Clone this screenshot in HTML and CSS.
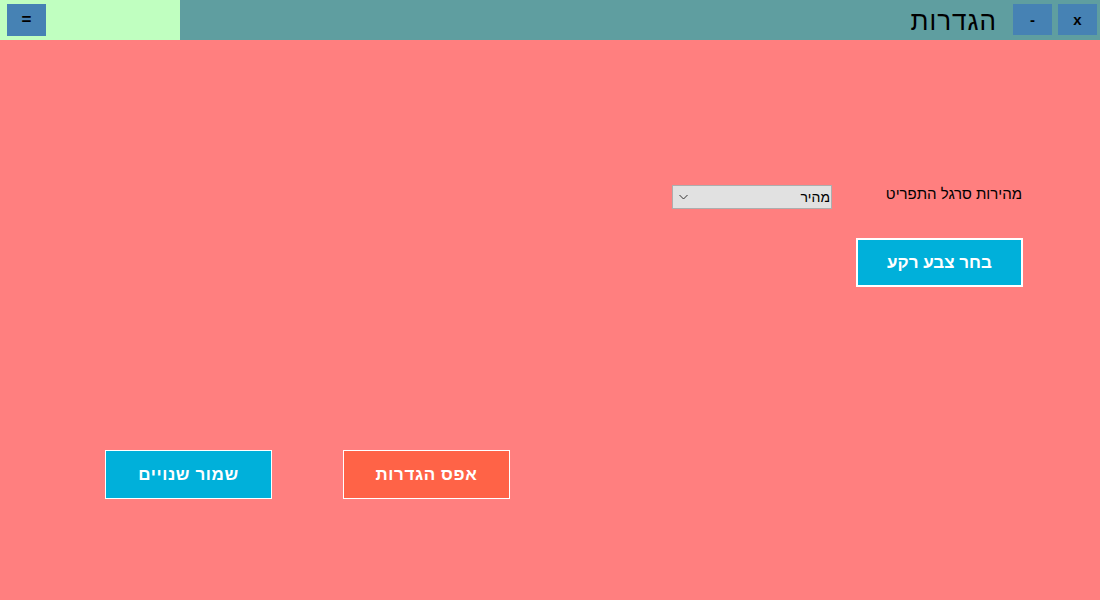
FILE: index.html
```html
<!DOCTYPE html>
<html lang="he">
<head>
<meta charset="utf-8">
<title>הגדרות</title>
<link rel="stylesheet" href="styles.css">
</head>
<body>
<div class="app">
  <header class="topbar">
    <div class="menu-pane">
      <button class="tb-btn menu-btn">=</button>
    </div>
    <div class="title-pane">
      <h1 class="title">הגדרות</h1>
      <button class="tb-btn">-</button>
      <button class="tb-btn">x</button>
    </div>
  </header>
  <main class="content">
    <section class="settings">
      <div class="setting-row">
        <div class="dropdown">
          <svg class="chev" width="9" height="6" viewBox="0 0 9 6"><path d="M0.5 1 L4.5 5 L8.5 1" fill="none" stroke="#333" stroke-width="1"/></svg>
          <span class="dd-value">מהיר</span>
        </div>
        <label class="setting-label">מהירות סרגל התפריט</label>
      </div>
      <button class="btn btn-blue btn-bg">בחר צבע רקע</button>
    </section>
    <section class="actions">
      <button class="btn btn-blue btn-thin">שמור שנויים</button>
      <button class="btn btn-red btn-thin">אפס הגדרות</button>
    </section>
  </main>
</div>
</body>
</html>
```
FILE: styles.css
```css
* { box-sizing: border-box; }
html, body { margin: 0; padding: 0; }
body {
  width: 1100px;
  height: 600px;
  background: #ff7f7f;
  font-family: "Liberation Sans", "DejaVu Sans", sans-serif;
  overflow: hidden;
}
.app { display: flex; flex-direction: column; height: 600px; }
.topbar { display: flex; height: 40px; }
.menu-pane {
  width: 180px;
  background: #c0ffc0;
  display: flex;
  align-items: flex-start;
  padding: 4px 0 0 7px;
}
.title-pane {
  flex: 1;
  background: #5f9ea0;
  display: flex;
  justify-content: flex-end;
  align-items: flex-start;
  padding: 4px 3px 0 0;
  gap: 6px;
}
.tb-btn {
  width: 39px;
  height: 31px;
  background: #4682b4;
  border: none;
  padding: 0;
  font-family: "Liberation Sans", "DejaVu Sans", sans-serif;
  font-weight: bold;
  font-size: 15px;
  color: #000;
}
.menu-btn { height: 32px; font-size: 17px; }
.title {
  margin: 0 10px 0 0;
  font-weight: normal;
  font-size: 26px;
  letter-spacing: 1px;
  line-height: 34px;
  color: #000;
  direction: rtl;
}
.content {
  flex: 1;
  display: flex;
  flex-direction: column;
  padding: 145px 77px 0 105px;
}
.settings { display: flex; flex-direction: column; align-items: flex-end; }
.setting-row { display: flex; align-items: center; height: 24px; margin-right: 1px; }
.dropdown {
  width: 160px;
  height: 24px;
  background: #e1e1e1;
  border: 1px solid #adadad;
  display: flex;
  align-items: center;
  justify-content: space-between;
  padding: 0 1px 0 6px;
}
.chev { display: block; }
.dd-value { font-size: 14px; color: #000; direction: rtl; }
.setting-label {
  width: 190px;
  text-align: right;
  font-size: 15px;
  color: #000;
  direction: rtl;
  line-height: 24px;
  margin-top: -6px;
}
.btn {
  width: 167px;
  height: 49px;
  color: #fff;
  font-family: "Liberation Sans", "DejaVu Sans", sans-serif;
  font-weight: bold;
  font-size: 17px;
  direction: rtl;
  padding: 0;
}
.btn-blue { background: #00b0da; }
.btn-red { background: #ff6347; }
.btn-bg { border: 2px solid #fff; margin-top: 29px; }
.btn-thin { border: 1px solid #fff; letter-spacing: 0.6px; }
.actions { display: flex; gap: 71px; margin-top: 163px; }
```
